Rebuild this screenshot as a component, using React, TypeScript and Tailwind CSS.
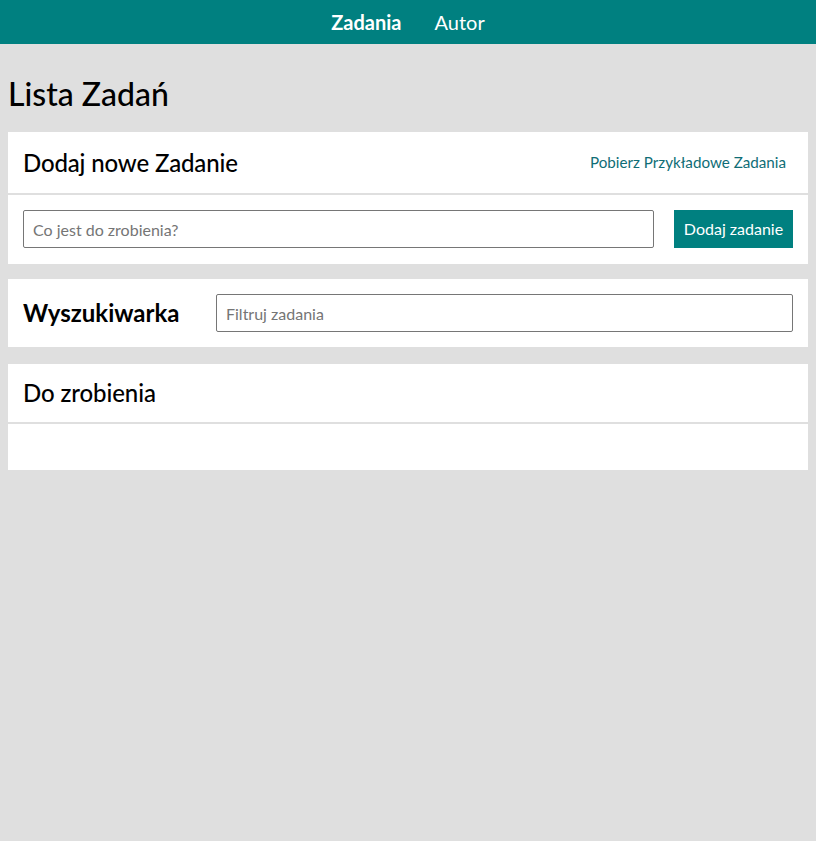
import { useState } from "react";

const FONT = "font-['Lato','Noto_Sans',sans-serif]";

export default function App() {
  const [task, setTask] = useState("");
  const [filter, setFilter] = useState("");

  return (
    <div className={`min-h-[841px] bg-[#dfdfdf] ${FONT}`}>
      <nav className="flex h-[44px] items-center justify-center gap-[33px] bg-[#008080] text-[20px] text-white">
        <a className="font-bold">Zadania</a>
        <a>Autor</a>
      </nav>

      <main className="px-[8px]">
        <h1 className="pb-[17px] pt-[28px] text-[32px] font-medium leading-[43px] text-black">Lista Zadań</h1>

        {/* dodawanie */}
        <section className="bg-white">
          <div className="flex h-[63px] items-center justify-between border-b-2 border-[#dfdfdf] pl-[15px] pr-[22px]">
            <h2 className="text-[24px] font-medium tracking-[-0.15px] text-black">Dodaj nowe Zadanie</h2>
            <a className="text-[15.2px] text-[#0f6d76]">Pobierz Przykładowe Zadania</a>
          </div>
          <div className="flex gap-[20px] px-[15px] pb-[16px] pt-[15px]">
            <input
              value={task}
              onChange={(e) => setTask(e.target.value)}
              placeholder="Co jest do zrobienia?"
              className="h-[38px] flex-1 rounded-[2px] border border-[#767676] px-[9px] text-[16px] text-black placeholder:text-[#757575]"
            />
            <button className="h-[38px] w-[119px] bg-[#008080] text-[16px] text-white">Dodaj zadanie</button>
          </div>
        </section>

        {/* wyszukiwarka */}
        <section className="mt-[15px] flex items-center bg-white px-[15px] py-[15px]">
          <h2 className="w-[193px] text-[24px] font-bold text-black">Wyszukiwarka</h2>
          <input
            value={filter}
            onChange={(e) => setFilter(e.target.value)}
            placeholder="Filtruj zadania"
            className="h-[38px] flex-1 rounded-[2px] border border-[#767676] px-[9px] text-[16px] text-black placeholder:text-[#757575]"
          />
        </section>

        {/* lista */}
        <section className="mt-[17px] bg-white">
          <div className="flex h-[60px] items-center border-b-2 border-[#dfdfdf] px-[15px]">
            <h2 className="text-[24px] font-medium tracking-[-0.1px] text-black">Do zrobienia</h2>
          </div>
          <div className="h-[46px]" />
        </section>
      </main>
    </div>
  );
}
